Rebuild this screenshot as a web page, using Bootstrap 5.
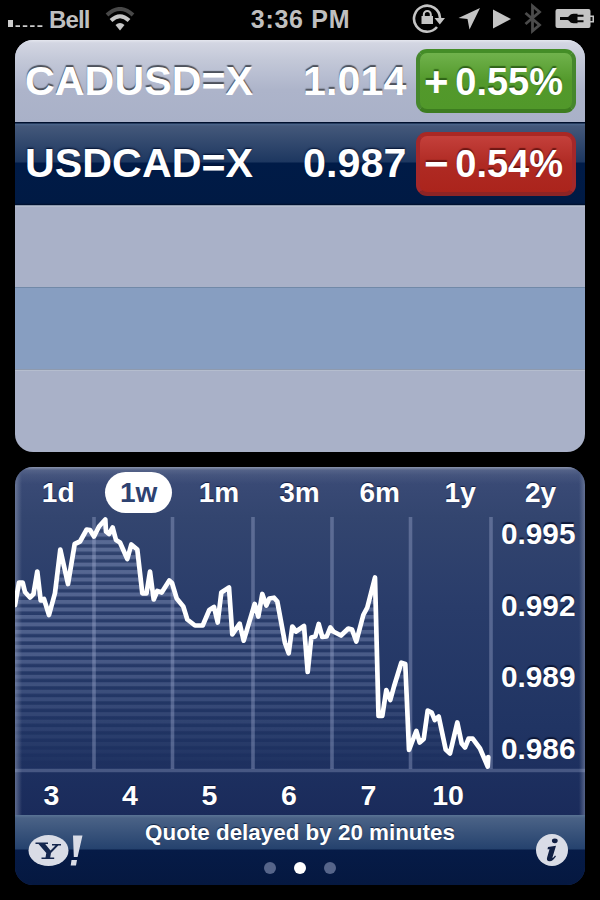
<!DOCTYPE html>
<html lang="en">
<head>
<meta charset="utf-8">
<meta name="viewport" content="width=device-width, initial-scale=1">
<title>Stocks</title>
<link href="https://cdn.jsdelivr.net/npm/bootstrap@5.3.0/dist/css/bootstrap.min.css" rel="stylesheet">
<style>
html,body{height:900px;overflow:hidden}
body{background:#000;font-family:"Liberation Sans",Arial,sans-serif;font-weight:700;color:#fff;width:600px;line-height:1}
svg{display:block;flex:none}
.status{height:40px;color:#bfbfbf;padding:0 6px 3px 7px}
.status .side{width:240px}
.carrier{font-size:24px;letter-spacing:-.9px;margin-left:5px;padding-top:2px}
.clock{font-size:25px;letter-spacing:.7px;width:103px;white-space:nowrap;padding-top:1px}
.panel{margin:0 15px;border-radius:18px;overflow:hidden}
.quotes{height:412px;background:#a9b1c8}
.quote{height:82px;padding:1px 9px 0 10px;font-size:41.2px;white-space:nowrap}
.quote.first{background:linear-gradient(#e4e6ee 0,#d3d6e2 3px,#c3c8d8 20px,#adb4ca 50px,#a9b1c8);text-shadow:0 -2px 1px #4d525c}
.quote.chosen{height:83px;background:linear-gradient(#00102e 0,#00102e 1px,#4b668c 2px,#44587a 4px,#1d3760 40px,#001b47 41px,#001a44 81px,#000f2a 83px);text-shadow:0 -1px 2px #001030}
.symbol{width:278px;letter-spacing:.05px}
.price{width:103px;letter-spacing:.1px}
.change{width:160px;height:64px;border-radius:11px;border:4px solid;font-size:38px;margin-left:auto;padding:1px 9px 0 4px}
.first .change,.chosen .change{margin-top:-1px}
.sign{font-size:42px;width:27px;line-height:34px}
.up{background:linear-gradient(#70b24c,#53992b 50%,#51982a);border-color:#448d27 #46872d #3d7c20;text-shadow:0 -2px 1px #2f6318}
.down{background:linear-gradient(#c4403b,#af2a23 50%,#ab241c);border-color:#a92824 #a4282a #8d2425;text-shadow:0 -2px 1px #6c1613}
.blank{height:82px;border-top:1px solid #8e9aae;box-shadow:inset 0 1px #b5bdce}
.blank.alt{background:#879ec1;border-color:#7189a8;box-shadow:none}
.chart{height:418px;margin-top:15px;background:linear-gradient(#3c4c78,#33456f 50px,#293c6a 140px,#203463 260px,#1a2b5b 348px)}
.chart-top{height:348px;background:linear-gradient(#8b94ad 0,#65729499 3px,#5a698c55 8px,transparent 17px),linear-gradient(90deg,#8993ae99,transparent 7px,transparent 564px,#8993ae88)}
.ranges{height:50px;padding-left:3px;font-size:28px;text-shadow:0 -1px 1px #101c40}
.ranges span{width:80.4px;height:41px;padding-top:3px}
.ranges .on{color:#2e4271;text-shadow:none;padding-top:1px}
.ranges .on b{background:#fff;border-radius:21px;width:67px;height:41px;padding-top:1px}
.plot{height:255px}
.scale{width:92px;font-size:29.8px;padding:2px 9.500px 9px 0;text-shadow:0 -2px 1px #0d1838}
.scale span{height:29px;line-height:29px}
.days{height:43px;font-size:28.5px;text-shadow:0 -1px 1px #0d1838;padding:4px 0 0 0}
.foot{height:70px;background:linear-gradient(#5a7495 0,#4a6286 3px,#25426e 34px,#061b47 35px,#051840);padding:0 17px 0 13px}
.foot .logo-box{width:56px}
.foot .info-box{width:56px}
.note{font-size:22.4px;padding-top:7px;text-shadow:0 -1px 1px #10203f;white-space:nowrap}
.page{width:12px;height:12px;border-radius:50%;background:#56658a}
.page.on{background:#fff}
.foot-mid{margin-right:-4px}
</style>
<script src="https://cdn.jsdelivr.net/npm/bootstrap@5.3.0/dist/js/bootstrap.bundle.min.js"></script>
</head>
<body>
<header class="status d-flex align-items-center justify-content-between">
  <div class="side d-flex align-items-center">
    <svg width="37" height="20" fill="#ccc"><path d="M1 11h5v7H1zM8.500 16.300h4.500v1.700H8.500zm7.300 0h4.500v1.700h-4.500zm7.300 0h4.500v1.700h-4.500zm7.300 0h5v1.700h-5z"/></svg>
    <span class="carrier">Bell</span>
    <svg width="30" height="24" class="ms-3" viewBox="0 0 30 24" fill="none" stroke-width="4"><path d="M2 8Q15-4 28 8" stroke="#484848"/><path d="M6 13.500Q15 5 24 13.500" stroke="#c6c6c6"/><path d="M15 23.500L10.500 18Q15 14 19.500 18Z" fill="#c6c6c6"/></svg>
  </div>
  <div class="clock text-center">3:36 PM</div>
  <div class="side d-flex align-items-center justify-content-end">
    <svg width="182" height="34" viewBox="0 0 182 34" fill="#c4c4c4">
      <path d="M25 25A13 13 0 1 1 28 16" fill="none" stroke="#c4c4c4" stroke-width="2.600"/>
      <path d="M22.500 16h10.500l-5.200 6.500z"/>
      <rect x="9.500" y="14" width="11.500" height="8"/><path d="M11.800 15v-2.500a3.500 3.500 0 0 1 7 0V15" fill="none" stroke="#c4c4c4" stroke-width="2"/>
      <path d="M68 6L57.500 27.500l-2-10.500-9-1z"/>
      <path d="M81 7.500L99 17 81 26.500z"/>
      <path d="M113.500 11l14 12-7 6V4l7 6-14 12" fill="none" stroke="#4b4b4b" stroke-width="2.800"/>
      <path d="M145.500 7h31q2 0 2 2v4.500h4v7h-4V24q0 2-2 2h-31q-2 0-2-2V9q0-2 2-2z"/>
      <path d="M148 15h7.500c2 0 2-3.200 6-3.200h4v1h6v2h-6v3.500h6v2h-6v1h-4c-4 0-4-3.200-6-3.200H148z" fill="#050505"/>
      <path d="M178.500 15h2v4h-2z" fill="#111"/>
    </svg>
  </div>
</header>

<main>
<section class="panel quotes">
  <div class="quote first d-flex align-items-center">
    <span class="symbol">CADUSD=X</span><span class="price text-end">1.014</span>
    <span class="change up d-flex align-items-center justify-content-between"><span class="sign">+</span><span>0.55%</span></span>
  </div>
  <div class="quote chosen d-flex align-items-center">
    <span class="symbol">USDCAD=X</span><span class="price text-end">0.987</span>
    <span class="change down d-flex align-items-center justify-content-between"><span class="sign">−</span><span>0.54%</span></span>
  </div>
  <div class="blank"></div><div class="blank alt"></div><div class="blank"></div>
</section>

<section class="panel chart">
  <div class="chart-top">
    <nav class="ranges d-flex pt-1">
      <span class="d-flex align-items-center justify-content-center">1d</span>
      <span class="on d-flex justify-content-center"><b class="d-flex align-items-center justify-content-center">1w</b></span>
      <span class="d-flex align-items-center justify-content-center">1m</span>
      <span class="d-flex align-items-center justify-content-center">3m</span>
      <span class="d-flex align-items-center justify-content-center">6m</span>
      <span class="d-flex align-items-center justify-content-center">1y</span>
      <span class="d-flex align-items-center justify-content-center">2y</span>
    </nav>
    <div class="plot d-flex">
      <svg width="478" height="255" viewBox="15 517 478 255" overflow="visible">
        <defs>
          <pattern id="stripes" width="20" height="7.480" y="637.400" patternUnits="userSpaceOnUse"><rect width="20" height="4" fill="#8d9cc4"/></pattern>
          <linearGradient id="fade" x1="0" y1="517" x2="0" y2="770" gradientUnits="userSpaceOnUse"><stop offset="0" stop-color="#fff" stop-opacity=".46"/><stop offset=".5" stop-color="#fff" stop-opacity=".38"/><stop offset="1" stop-color="#fff" stop-opacity="0"/></linearGradient>
          <mask id="soft" maskUnits="userSpaceOnUse" x="15" y="510" width="480" height="262"><rect x="15" y="510" width="480" height="262" fill="url(#fade)"/></mask>
        </defs>
        <polygon id="area" fill="url(#stripes)" mask="url(#soft)"/>
        <path d="M94 517v252M172.500 517v252M253 517v252M332 517v252M410.500 517v252M491 517v252" stroke="#a9b5d8" stroke-opacity=".36" stroke-width="3.600"/>
        <path d="M15 770.500h570" stroke="#a9b5d8" stroke-opacity=".3" stroke-width="3.400"/>
        <polyline id="line" fill="none" stroke="#fff" stroke-width="4.700" stroke-linejoin="round" stroke-linecap="round"/>
      </svg>
      <div class="scale d-flex flex-column justify-content-between align-items-end"><span>0.995</span><span>0.992</span><span>0.989</span><span>0.986</span></div>
    </div>
    <div class="days d-flex text-center align-items-center"><span style="width:73px">3</span><span style="width:84px">4</span><span style="width:75px">5</span><span style="width:84px">6</span><span style="width:75px">7</span><span style="width:84px">10</span></div>
  </div>
  <footer class="foot d-flex align-items-center justify-content-between">
    <div class="logo-box"><svg width="56" height="40" viewBox="0 0 56 40">
      <ellipse cx="20.500" cy="20.500" rx="20" ry="15.500" fill="#d9dce6"/>
      <path d="M7.500 12.500h12.500v1.500h-2.800l5.300 6.500 5-5h-3.500V14h9v1.500h-2.700l-7.300 7.500-.8 4.500h4v1.500H13.500v-1.500h4l.8-4.500-7.800-9h-3z" fill="#14264e"/>
      <path d="M45 5.500h9.500L49.600 27h-3.800zM43.500 30h5.500l-1 5.500h-5.300z" fill="#d9dce6"/>
    </svg></div>
    <div class="foot-mid h-100 d-flex flex-column align-items-center">
      <div class="note">Quote delayed by 20 minutes</div>
      <div class="d-flex mt-auto pb-2" style="gap:18px;margin-bottom:3px"><i class="page"></i><i class="page on"></i><i class="page"></i></div>
    </div>
    <div class="info-box d-flex justify-content-end"><svg width="32" height="34" viewBox="0 0 32 34"><circle cx="16" cy="17" r="16" fill="#d9dce6"/><path d="M12 14l8-1.200-3.700 12.200q1.400-.3 2.700-2.500l1 .7q-3 5-6.300 5-3.700 0-2.600-3.700l2.400-8.300H11.500z" fill="#101f43"/><ellipse cx="18.800" cy="7.800" rx="2.900" ry="2.400" fill="#101f43"/></svg></div>
  </footer>
</section>
</main>
<script>
const pts="15,605 19,582.5 22.7,582.5 25,592 30,597.5 33.5,594 37.3,571.5 40.7,600.5 44,599 49,615 55,593 60.3,549.5 68,584 74.7,544 80,541.5 86.7,529.5 90,530 94,536.5 99,526.5 105.3,519.5 106,531.5 109,534 112.7,527.5 116,540 120,542.5 127.3,559 131.3,544.5 137.3,549.5 142.3,593.3 146.5,593.3 150,571.5 153.7,599.5 157.3,591 161.7,592.5 169.3,580.5 172,583 176.7,598.5 183.3,606.5 187.3,619.5 195,625.5 202.7,625.5 209.3,610 214,607 217.7,622.5 221.3,592.5 229,587.5 232.3,634.3 239.7,623.7 243.7,640.7 254.7,604 258.3,616.5 262.3,594 266.3,605.5 269.3,598.5 274,597.7 277.3,601.5 285,643 288.7,653.3 292.3,626.5 296,631.5 304,626 307.7,672 311.3,637.5 315.3,636.5 318.7,624 322.3,637 326.7,636.5 330.3,627.5 333.3,631.5 341,635.5 348.3,628.5 352,629.5 356.3,641.5 363.3,615 367.3,607.5 375,577.5 378.5,716 382.3,716 386.3,690 390.3,700 394,686.5 401.3,662.7 405.3,664 409,750 416.3,731 419.7,742.5 423.7,739 427.7,710.5 431.7,712.5 434.7,720 438.7,716.5 445.7,749.5 450,753.5 457.3,722.5 461.7,743.5 465,747.5 468.7,738.5 472.7,738.7 480,748.5 487.7,766.5 488.3,757";
document.getElementById("line").setAttribute("points",pts);
document.getElementById("area").setAttribute("points","15,769 "+pts+" 488,769");
</script>
</body>
</html>
